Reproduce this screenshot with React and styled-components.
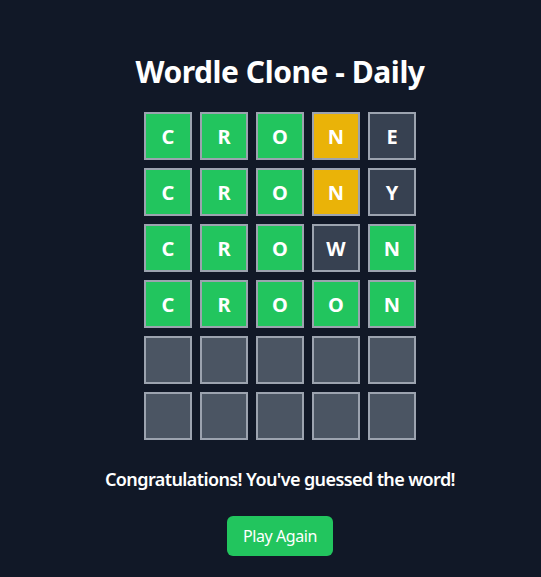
import React from "react";
import styled, {createGlobalStyle} from "styled-components";

const GlobalStyle = createGlobalStyle`
	html, body {
		margin: 0;
		padding: 0;
		background: #111827;
		overflow-x: hidden;
	}
	body {
		font-family: "Noto Sans", "Open Sans", sans-serif;
		color: #ffffff;
	}
`

const guesses = [
	[["C","correct"],["R","correct"],["O","correct"],["N","present"],["E","absent"]],
	[["C","correct"],["R","correct"],["O","correct"],["N","present"],["Y","absent"]],
	[["C","correct"],["R","correct"],["O","correct"],["W","absent"],["N","correct"]],
	[["C","correct"],["R","correct"],["O","correct"],["O","correct"],["N","correct"]],
]

const tileColors = {
	correct: "#22c55e",
	present: "#eab308",
	absent: "#374151",
	empty: "#4b5563",
}

const App = () => {
	const rows = [...guesses]
	while(rows.length < 6){
		rows.push(Array(5).fill(["","empty"]))
	}
	return <Page>
		<GlobalStyle/>
		<Title>Wordle Clone - Daily</Title>
		<Board>
			{rows.map((row,i)=>
				<Row key={i}>
					{row.map(([letter,state],j)=>
						<Tile key={j} $state={state}>{letter}</Tile>
					)}
				</Row>
			)}
		</Board>
		<Message>Congratulations! You've guessed the word!</Message>
		<PlayButton>Play Again</PlayButton>
	</Page>
}

const Page = styled.div`
	width: 560px;
	min-height: 577px;
	box-sizing: border-box;
	padding-top: 54px;
	display: flex;
	flex-direction: column;
	align-items: center;
`

const Title = styled.h1`
	margin: 0 0 22px;
	font-size: 30px;
	line-height: 36px;
	font-weight: 700;
	letter-spacing: -0.45px;
`

const Board = styled.div`
	display: flex;
	flex-direction: column;
	gap: 8px;
`

const Row = styled.div`
	display: flex;
	gap: 8px;
`

const Tile = styled.div`
	width: 48px;
	height: 48px;
	box-sizing: border-box;
	border: 2px solid #9ca3af;
	background: ${p=>tileColors[p.$state]};
	display: flex;
	align-items: center;
	justify-content: center;
	font-size: 20px;
	font-weight: 700;
	color: #ffffff;
`

const Message = styled.p`
	margin: 25px 0 0;
	font-size: 18px;
	line-height: 28px;
	font-weight: 600;
	letter-spacing: -0.6px;
`

const PlayButton = styled.button`
	margin-top: 23px;
	padding: 8px 16px;
	border: none;
	border-radius: 6px;
	background: #22c55e;
	color: #ffffff;
	font-family: inherit;
	font-size: 16px;
	line-height: 24px;
	letter-spacing: -0.4px;
	cursor: pointer;
`

export default App;
